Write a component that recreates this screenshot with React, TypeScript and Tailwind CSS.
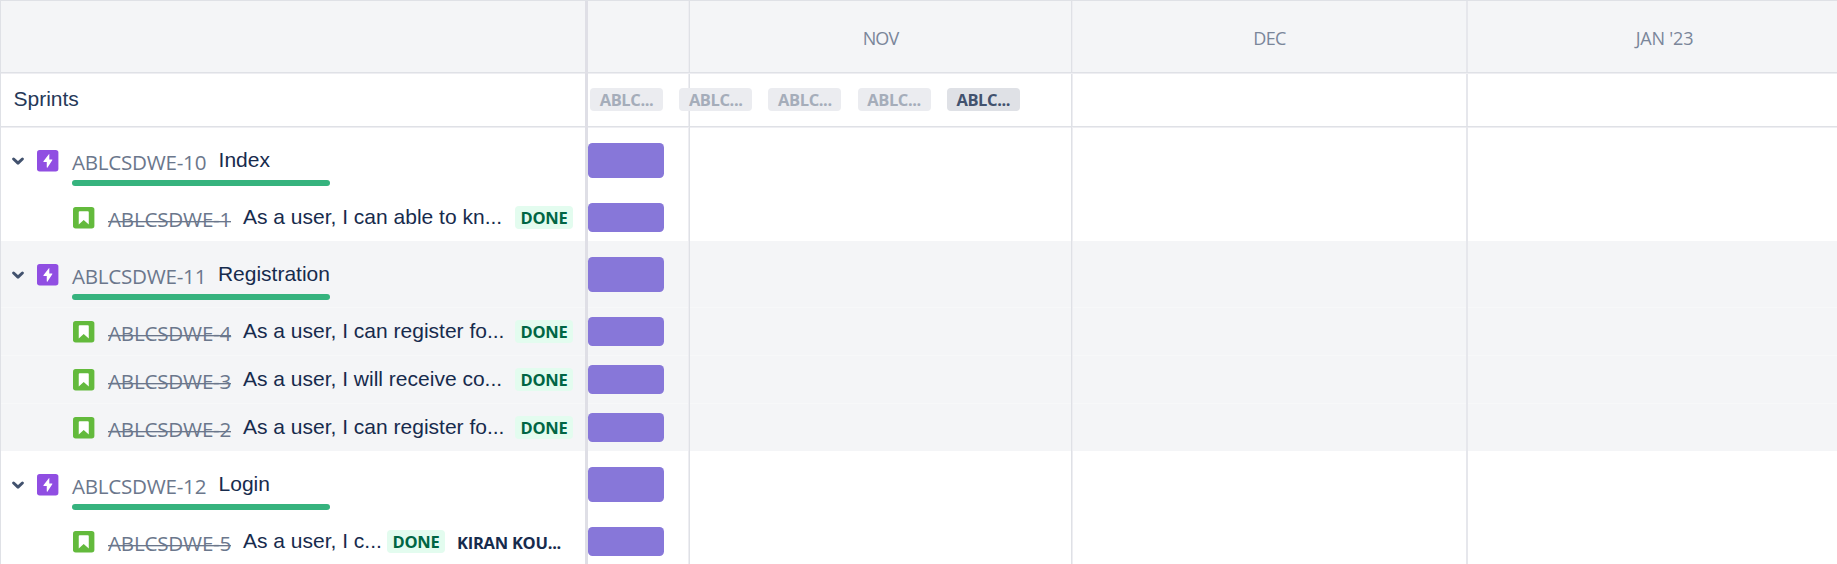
import React from "react";

const LABEL = "font-['Open_Sans','Noto_Sans',sans-serif]";
const BODY = "font-['Liberation_Sans',Arial,sans-serif]";

type Issue = { key: string; summary: string; assignee?: string };
type Epic = { key: string; title: string; shaded?: boolean; issues: Issue[] };

const epics: Epic[] = [
  {
    key: "ABLCSDWE-10",
    title: "Index",
    issues: [{ key: "ABLCSDWE-1", summary: "As a user, I can able to kn..." }],
  },
  {
    key: "ABLCSDWE-11",
    title: "Registration",
    shaded: true,
    issues: [
      { key: "ABLCSDWE-4", summary: "As a user, I can register fo..." },
      { key: "ABLCSDWE-3", summary: "As a user, I will receive co..." },
      { key: "ABLCSDWE-2", summary: "As a user, I can register fo..." },
    ],
  },
  {
    key: "ABLCSDWE-12",
    title: "Login",
    issues: [{ key: "ABLCSDWE-5", summary: "As a user, I c...", assignee: "KIRAN KOU..." }],
  },
];

const sprints = [false, false, false, false, true];

function VLine({ kind }: { kind: "left" | "right" | "even" }) {
  const a = kind === "left" ? "bg-[#dfe1e6]" : kind === "right" ? "bg-[#eeeef2]" : "bg-[#e6e7ec]";
  const b = kind === "left" ? "bg-[#eeeef2]" : kind === "right" ? "bg-[#dfe1e6]" : "bg-[#e6e7ec]";
  return (
    <div className="flex w-0.5 shrink-0 self-stretch">
      <div className={`w-px ${a}`} />
      <div className={`w-px ${b}`} />
    </div>
  );
}

function Months({ first, labels = [] }: { first?: React.ReactNode; labels?: string[] }) {
  const cell = "flex items-center justify-center shrink-0";
  return (
    <div className={`flex flex-1 text-[18px] text-[#7a869a] ${LABEL}`}>
      <div className="flex w-[100px] shrink-0 items-center">{first}</div>
      <VLine kind="right" />
      <div className={`${cell} w-[381px]`}>
        <span className="mt-[3px] tracking-[-0.9px]">{labels[0]}</span>
      </div>
      <VLine kind="left" />
      <div className={`${cell} w-[393px]`}>
        <span className="mt-[3px] tracking-[-0.6px]">{labels[1]}</span>
      </div>
      <VLine kind="even" />
      <div className={`${cell} w-[393px]`}>
        <span className="mt-[3px] tracking-[-0.2px]">{labels[2]}</span>
      </div>
    </div>
  );
}

function Divider() {
  return <div className="w-[3px] shrink-0 bg-[#dfdfe6]" />;
}

function HLine() {
  return (
    <div className="flex h-0.5 shrink-0">
      <div className="w-[584px] shrink-0 border-t border-[#dfe1e6] bg-[#eeeef2]" />
      <Divider />
      <div className="flex-1 border-t border-[#dfe1e6] bg-[#eeeef2]" />
    </div>
  );
}

function Bar({ tall }: { tall?: boolean }) {
  return (
    <div
      className={`mt-px w-[76px] rounded-[4.5px] bg-[#8777d9] ${tall ? "h-[35.5px]" : "h-[29.5px]"}`}
    />
  );
}

function EpicIcon() {
  return (
    <svg viewBox="0 0 16 16" className="size-[21.4px] shrink-0 overflow-visible">
      <rect width="16" height="16" rx="2" fill="#904ee2" />
      <path d="M8.9 3.1 4.8 8.4c-.1.3 0 .5.3.5h2.2v3.9c0 .5.3.6.6.2l3.5-5.3c.2-.3.1-.6-.3-.6H9.2V3.3c0-.3-.1-.4-.3-.2Z" fill="#fff" />
    </svg>
  );
}

function StoryIcon() {
  return (
    <svg viewBox="0 0 16 16" className="size-[21.4px] shrink-0 overflow-visible">
      <rect width="16" height="16" rx="2" fill="#63ba3c" />
      <path d="M5.2 3.2h5.7c.5 0 .9.3.9.8v9.1L8 9.8l-3.7 3.3V4c0-.5.4-.8.9-.8Z" fill="#fff" />
    </svg>
  );
}

function Chevron() {
  return (
    <svg viewBox="0 0 12 8" className="h-2 w-3 shrink-0 overflow-visible">
      <path d="M1.6 2 6 6.1 10.4 2" fill="none" stroke="#42526e" strokeWidth="3" strokeLinecap="round" strokeLinejoin="round" />
    </svg>
  );
}

function Done() {
  return (
    <span className={`flex h-[23px] w-[58px] shrink-0 items-center justify-center rounded-[4px] bg-[#e3fcef] text-[16.5px] leading-[23px] font-bold tracking-[-0.3px] text-[#006644] ${LABEL}`}>
      DONE
    </span>
  );
}

function EpicRow({ epic }: { epic: Epic }) {
  return (
    <div className="flex h-[66px] shrink-0">
      <div className="flex w-[584px] shrink-0 items-start pl-[11px] whitespace-nowrap">
        <div className="mt-[30px]"><Chevron /></div>
        <div className="mt-[23px] ml-[13.3px]"><EpicIcon /></div>
        <div className="ml-[13.3px] flex w-[258px] flex-col">
          <div className="flex h-[53px]">
            <span className={`mt-[21px] w-[146.6px] text-[20.6px] leading-7 tracking-[-0.25px] text-[#6b778c] ${LABEL}`}>{epic.key}</span>
            <span className={`mt-[19px] text-[21px] leading-7 text-[#172b4d] ${BODY}`}>{epic.title}</span>
          </div>
          <div className="h-1.5 rounded-full bg-[#36b37e]" />
        </div>
      </div>
      <Divider />
      <Months first={<Bar tall />} />
    </div>
  );
}

function IssueRow({ issue, shaded }: { issue: Issue; shaded?: boolean }) {
  return (
    <div className={`flex h-12 shrink-0 ${shaded ? "shadow-[inset_0_1px_#f7f8f9]" : ""}`}>
      <div className="flex w-[584px] shrink-0 items-start pl-[72.3px] whitespace-nowrap">
        <div className="mt-[14px]"><StoryIcon /></div>
        <div className={`mt-[12px] ml-[13.3px] w-[135px] text-[20.6px] leading-7 tracking-[-0.2px] text-[#6b778c] ${LABEL}`}>
          <span className="relative inline-block">
            {issue.key}
            <span className="absolute inset-x-0 top-4 h-0.5 border-t border-[#6b778c] bg-[#6b778c]/35 bg-clip-padding" />
          </span>
        </div>
        <span className={`mt-[10px] text-[21px] leading-7 text-[#172b4d] ${BODY} ${issue.assignee ? "w-[144px]" : "w-[272px]"}`}>{issue.summary}</span>
        <div className="mt-[13px]"><Done /></div>
        {issue.assignee && (
          <span className={`mt-[14px] ml-[12px] text-[16.5px] leading-[23px] font-bold tracking-[-0.25px] text-[#172b4d] ${LABEL}`}>{issue.assignee}</span>
        )}
      </div>
      <Divider />
      <Months first={<Bar />} />
    </div>
  );
}

export default function App() {
  return (
    <div className="flex h-[564px] w-[1837px] flex-col overflow-hidden border-t border-l border-[#dfe1e6] bg-white">
      <div className="flex h-[71px] shrink-0 bg-[#f4f5f7]">
        <div className="w-[584px] shrink-0" />
        <Divider />
        <Months labels={["NOV", "DEC", "JAN '23"]} />
      </div>
      <HLine />
      <div className="relative flex h-[52px] shrink-0">
        <div className={`w-[584px] shrink-0 pt-[11px] pl-[12.5px] text-[21px] leading-7 text-[#253858] ${BODY}`}>Sprints</div>
        <Divider />
        <Months />
        <div className="absolute top-[14px] left-[589px] flex gap-[16.2px]">
          {sprints.map((active, i) => (
            <div
              key={i}
              className={`h-[23px] w-[73px] rounded-[4px] text-center text-[16.5px] leading-[24px] font-bold tracking-[-0.4px] ${LABEL} ${active ? "bg-[#dfe1e6] text-[#42526e]" : "bg-[#ebecf0] text-[#a5adba]"}`}
            >
              ABLC...
            </div>
          ))}
        </div>
      </div>
      <HLine />
      <div className="-mt-px flex flex-col">
        {epics.map((epic) => (
          <div key={epic.key} className={epic.shaded ? "bg-[#f4f5f7]" : ""}>
            <EpicRow epic={epic} />
            {epic.issues.map((issue) => (
              <IssueRow key={issue.key} issue={issue} shaded={epic.shaded} />
            ))}
          </div>
        ))}
      </div>
    </div>
  );
}
